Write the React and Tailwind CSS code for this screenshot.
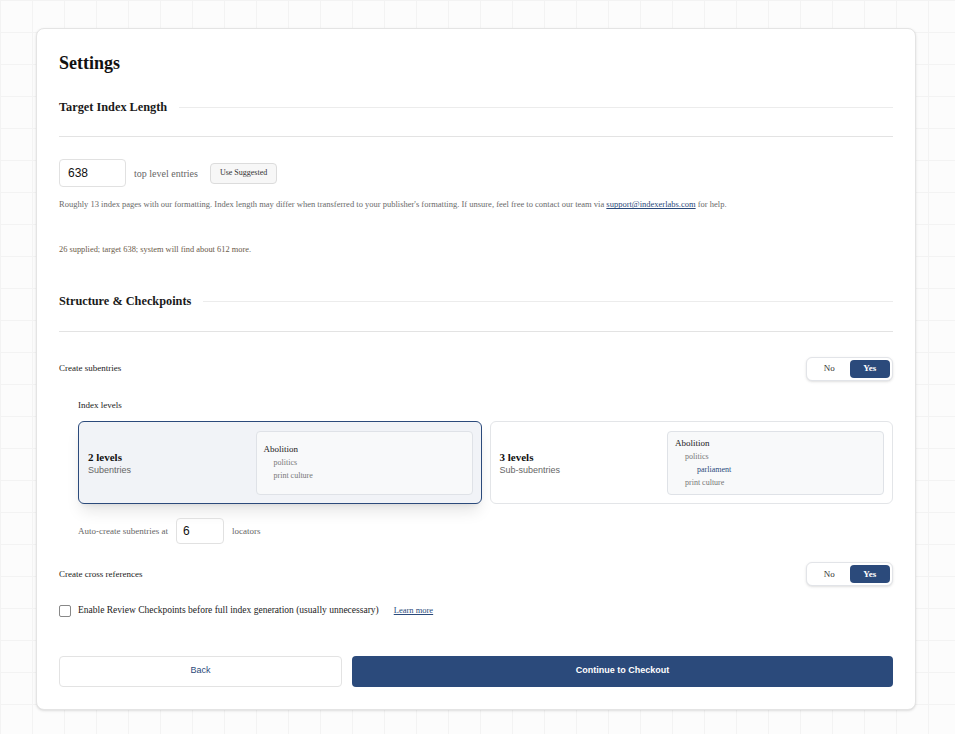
import React, { useState } from 'react';

const serif = { fontFamily: '"Liberation Serif", "DejaVu Serif", serif' };

const SectionTitle = ({ children }) => (
  <div className="flex items-center gap-3">
    <h2 className="text-[12.3px] font-bold text-[#1a1a1a] whitespace-nowrap">{children}</h2>
    <div className="flex-1 h-px bg-[#ececec]" />
  </div>
);

const Toggle = ({ value, onChange }) => (
  <div className="flex items-center w-[87px] h-[24px] rounded-md border border-[#e2e4e8] bg-white p-[2px] shadow-sm">
    <button
      onClick={() => onChange(false)}
      className={`flex-1 h-full rounded text-[9px] ${!value ? 'bg-[#2b4a7b] text-white font-bold' : 'text-[#333]'}`}
    >
      No
    </button>
    <button
      onClick={() => onChange(true)}
      className={`flex-1 h-full rounded text-[9px] ${value ? 'bg-[#2b4a7b] text-white font-bold' : 'text-[#333]'}`}
    >
      Yes
    </button>
  </div>
);

const LevelCard = ({ selected, title, subtitle, onClick, children }) => (
  <button
    onClick={onClick}
    className={`flex-1 h-[83px] flex items-center justify-between rounded-md pl-[9px] pr-[8px] text-left ${
      selected ? 'border border-[#2b4a7b] bg-[#f1f3f7] shadow-lg' : 'border border-[#e3e5e8] bg-white'
    }`}
  >
    <div className="flex flex-col">
      <span className="text-[11px] font-bold text-[#111] leading-[14px]">{title}</span>
      <span className="text-[9px] text-[#666] leading-[12px]" style={{ fontFamily: '"Liberation Sans", Arial, sans-serif' }}>{subtitle}</span>
    </div>
    <div className="w-[217px] h-[64px] rounded border border-[#dfe2e7] bg-[#f8f9fa] px-[7px] flex flex-col justify-center">
      {children}
    </div>
  </button>
);

export default function App() {
  const [sub, setSub] = useState(true);
  const [cross, setCross] = useState(true);
  const [levels, setLevels] = useState(2);
  const [checked, setChecked] = useState(false);

  return (
    <div
      className="min-h-[734px] w-full bg-[#fcfcfc] bg-[linear-gradient(#f3f3f3_1px,transparent_1px),linear-gradient(90deg,#f3f3f3_1px,transparent_1px)] bg-[size:32px_32px] pt-[28px] pb-[25px]"
      style={serif}
    >
      <div className="w-[880px] ml-[36px] rounded-lg border border-[#e4e4e4] bg-white shadow-sm px-[22px] pt-[22px] pb-[22px]">
        <h1 className="text-[18px] font-semibold text-[#111] leading-[24px]">Settings</h1>

        <div className="mt-[23px]">
          <SectionTitle>Target Index Length</SectionTitle>
        </div>
        <div className="mt-[20px] h-px bg-[#e3e3e3]" />

        <div className="mt-[22px] flex items-center">
          <input
            defaultValue="638"
            className="w-[67px] h-[28px] rounded border border-[#e1e1e1] px-[8px] text-[12px] text-[#111] outline-none"
            style={{ fontFamily: '"Liberation Sans", Arial, sans-serif' }}
          />
          <span className="ml-[8px] text-[10px] text-[#666]">top level entries</span>
          <button className="ml-[12px] h-[21px] px-[9px] rounded border border-[#dcdcdc] bg-[#f7f7f7] text-[8px] text-[#333]">
            Use Suggested
          </button>
        </div>
        <p className="mt-[11px] text-[8.5px] text-[#6a6a6a] leading-[12px]">
          Roughly 13 index pages with our formatting. Index length may differ when transferred to your publisher's formatting. If unsure, feel free to contact our team via{' '}
          <a className="text-[#2b4a7b] underline">support@indexerlabs.com</a> for help.
        </p>
        <p className="mt-[34px] text-[8.4px] text-[#6b5a4a] leading-[12px]">26 supplied; target 638; system will find about 612 more.</p>

        <div className="mt-[36px]">
          <SectionTitle>Structure &amp; Checkpoints</SectionTitle>
        </div>
        <div className="mt-[20px] h-px bg-[#e3e3e3]" />

        <div className="mt-[25px] flex items-center justify-between">
          <span className="text-[9px] text-[#222]">Create subentries</span>
          <Toggle value={sub} onChange={setSub} />
        </div>

        <div className="pl-[19px]">
          <div className="mt-[18px] text-[9px] text-[#222]">Index levels</div>
          <div className="mt-[9px] flex gap-[8px]">
            <LevelCard selected={levels === 2} title="2 levels" subtitle="Subentries" onClick={() => setLevels(2)}>
              <span className="text-[9px] text-[#222] leading-[13px]">Abolition</span>
              <span className="text-[8px] text-[#777] leading-[13px] pl-[10px]">politics</span>
              <span className="text-[8px] text-[#777] leading-[13px] pl-[10px]">print culture</span>
            </LevelCard>
            <LevelCard selected={levels === 3} title="3 levels" subtitle="Sub-subentries" onClick={() => setLevels(3)}>
              <span className="text-[9px] text-[#222] leading-[13px]">Abolition</span>
              <span className="text-[8px] text-[#777] leading-[13px] pl-[10px]">politics</span>
              <span className="text-[8px] text-[#2b4a7b] leading-[13px] pl-[22px]">parliament</span>
              <span className="text-[8px] text-[#777] leading-[13px] pl-[10px]">print culture</span>
            </LevelCard>
          </div>
          <div className="mt-[14px] flex items-center">
            <span className="text-[9px] text-[#666]">Auto-create subentries at</span>
            <input
              defaultValue="6"
              className="ml-[8px] w-[48px] h-[26px] rounded border border-[#e1e1e1] px-[6px] text-[12px] text-[#111] outline-none"
              style={{ fontFamily: '"Liberation Sans", Arial, sans-serif' }}
            />
            <span className="ml-[8px] text-[9px] text-[#666]">locators</span>
          </div>
        </div>

        <div className="mt-[18px] flex items-center justify-between">
          <span className="text-[9px] text-[#222]">Create cross references</span>
          <Toggle value={cross} onChange={setCross} />
        </div>

        <label className="mt-[17px] flex items-center">
          <input
            type="checkbox"
            checked={checked}
            onChange={() => setChecked(!checked)}
            className="appearance-none w-[12px] h-[12px] border border-[#888] rounded-[2px] bg-white"
          />
          <span className="ml-[7px] text-[9.5px] text-[#222]">Enable Review Checkpoints before full index generation (usually unnecessary)</span>
          <a className="ml-[15px] text-[8.5px] text-[#2b4a7b] underline">Learn more</a>
        </label>

        <div className="mt-[38px] flex gap-[10px]" style={{ fontFamily: '"Liberation Sans", Arial, sans-serif' }}>
          <button className="w-[283px] h-[31px] rounded border border-[#e3e3e3] bg-white text-[9px] text-[#2b4a7b]">
            Back
          </button>
          <button className="flex-1 h-[31px] rounded bg-[#2b4a7b] text-[9px] font-bold text-white">
            Continue to Checkout
          </button>
        </div>
      </div>
    </div>
  );
}
